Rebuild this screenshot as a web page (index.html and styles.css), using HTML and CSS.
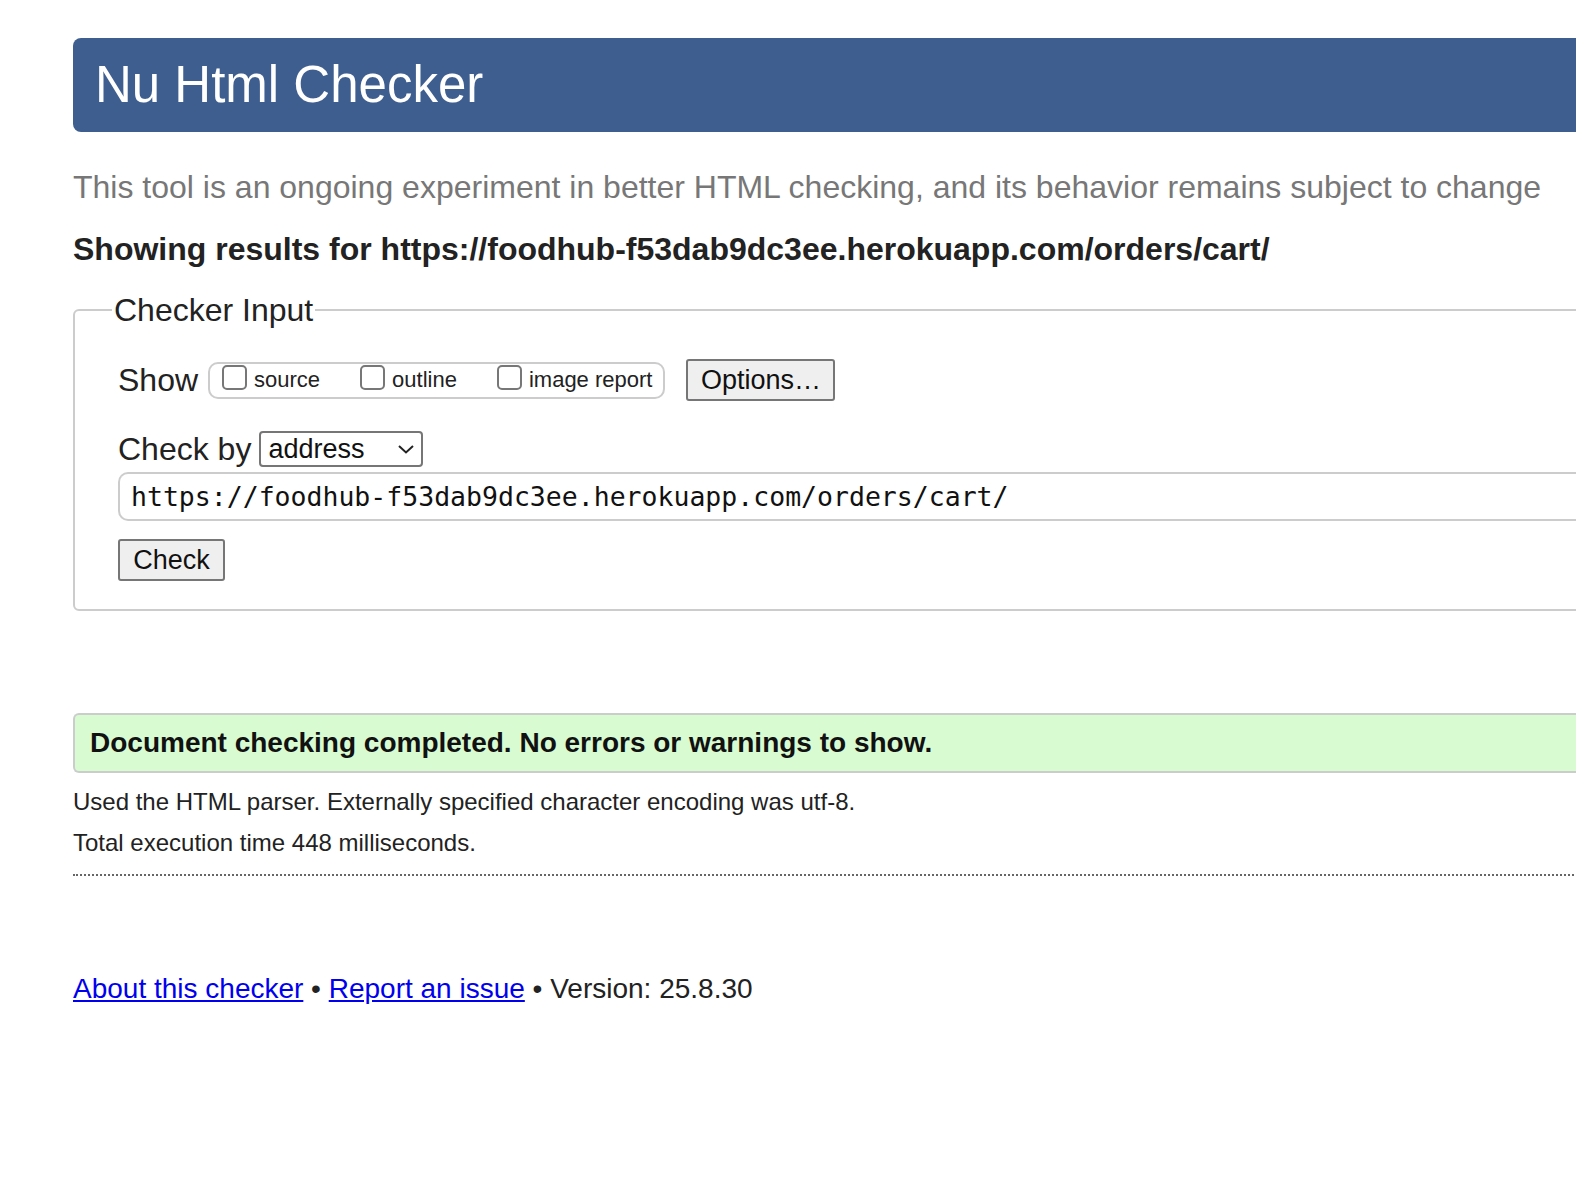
FILE: index.html
```html
<!DOCTYPE html>
<html lang="en">
<head>
<meta charset="utf-8">
<title>Nu Html Checker</title>
<link rel="stylesheet" href="styles.css">
</head>
<body>
<div class="page">
  <h1 class="title">Nu Html Checker</h1>
  <p class="lede">This tool is an ongoing experiment in better HTML checking, and its behavior remains subject to change</p>
  <p class="showing">Showing results for https://foodhub-f53dab9dc3ee.herokuapp.com/orders/cart/</p>
  <fieldset class="input-box">
    <legend class="legend">Checker Input</legend>
    <div class="row show-row">
      <span class="label">Show</span>
      <span class="group">
        <label class="opt"><span class="cb"></span>source</label>
        <label class="opt"><span class="cb"></span>outline</label>
        <label class="opt"><span class="cb"></span>image report</label>
      </span>
      <span class="btn options">Options…</span>
    </div>
    <div class="row by-row">
      <span class="label">Check by</span>
      <span class="select">address
        <svg class="chev" width="18" height="12" viewBox="0 0 18 12"><path d="M2 3 L9 9.5 L16 3" fill="none" stroke="#222" stroke-width="2"/></svg>
      </span>
    </div>
    <div class="url">https://foodhub-f53dab9dc3ee.herokuapp.com/orders/cart/</div>
    <div class="row"><span class="btn check">Check</span></div>
  </fieldset>
  <div class="success">Document checking completed. No errors or warnings to show.</div>
  <p class="info">Used the HTML parser. Externally specified character encoding was utf-8.</p>
  <p class="info second">Total execution time 448 milliseconds.</p>
  <hr class="dots">
  <p class="footer"><a href="#">About this checker</a> • <a href="#">Report an issue</a> • Version: 25.8.30</p>
</div>
</body>
</html>
```
FILE: styles.css
```css
html, body {
  margin: 0;
  padding: 0;
  overflow: hidden;
  background: #fff;
}
body {
  font-family: "Liberation Sans", Arial, Helvetica, sans-serif;
  color: #222;
}
.page {
  width: 1620px;
  padding: 38px 0 0 73px;
}
.title {
  margin: 0;
  height: 94px;
  box-sizing: border-box;
  padding: 0 0 0 22px;
  background: #3e5e90;
  color: #fff;
  font-weight: normal;
  font-size: 51px;
  line-height: 94px;
  border-radius: 8px;
}
.lede {
  margin: 36px 0 0;
  font-size: 32px;
  line-height: 38px;
  color: #777;
}
.showing {
  margin: 24px 0 0;
  font-size: 32px;
  line-height: 38px;
  font-weight: bold;
  color: #222;
}
.input-box {
  margin: 23px 0 0;
  border: 2px solid #ccc;
  border-radius: 6px;
  padding: 29px 0 28px 43px;
  min-width: 0;
}
.legend {
  font-size: 32px;
  padding: 0 2px;
  margin-left: -6px;
  line-height: 38px;
  color: #222;
}
.row {
  display: flex;
  align-items: center;
}
.label {
  font-size: 32px;
  margin-right: 10px;
}
.show-row {
  height: 44px;
}
.group {
  display: flex;
  align-items: center;
  border: 2px solid #ccc;
  border-radius: 10px;
  height: 37px;
  box-sizing: border-box;
  padding: 0 11px 0 12px;
}
.opt {
  display: flex;
  align-items: center;
  font-size: 22px;
  margin-right: 40px;
}
.opt:last-child { margin-right: 0; }
.cb {
  width: 21px;
  height: 21px;
  border: 2px solid #777;
  border-radius: 5px;
  margin: -5px 7px 0 0;
}
.btn {
  display: inline-flex;
  align-items: center;
  justify-content: center;
  background: #efefef;
  border: 2px solid #767676;
  border-radius: 3px;
  font-size: 27px;
  color: #111;
  box-sizing: border-box;
}
.options {
  margin-left: 21px;
  width: 149px;
  height: 42px;
}
.by-row {
  margin-top: 29px;
  height: 36px;
}
.by-row .label {
  margin-right: 8px;
}
.select {
  display: inline-flex;
  align-items: center;
  justify-content: space-between;
  box-sizing: border-box;
  width: 164px;
  height: 36px;
  border: 2px solid #767676;
  border-radius: 4px;
  padding: 0 6px 0 7px;
  font-size: 27px;
  color: #111;
}
.chev { display: block; }
.url {
  margin-top: 5px;
  height: 49px;
  box-sizing: border-box;
  border: 2px solid #ccc;
  border-right: none;
  border-radius: 10px 0 0 10px;
  padding: 0 0 0 11px;
  font-family: "DejaVu Sans Mono", "Liberation Mono", monospace;
  font-size: 26.5px;
  line-height: 45px;
  color: #111;
}
.check {
  margin-top: 18px;
  width: 107px;
  height: 42px;
}
.success {
  margin-top: 102px;
  height: 60px;
  box-sizing: border-box;
  border: 2px solid #ccc;
  border-right: none;
  border-radius: 6px 0 0 6px;
  background: #d8fbd2;
  padding-left: 15px;
  font-weight: bold;
  font-size: 28px;
  line-height: 56px;
  color: #111;
}
.info {
  margin: 14px 0 0;
  font-size: 24px;
  line-height: 30px;
}
.info.second {
  margin-top: 11px;
}
.dots {
  margin: 16px 0 0;
  border: none;
  border-top: 2px dotted #666;
  height: 0;
}
.footer {
  margin: 96px 0 0;
  font-size: 28px;
  line-height: 34px;
}
.footer a {
  color: #0000ee;
  text-decoration: underline;
}
```
